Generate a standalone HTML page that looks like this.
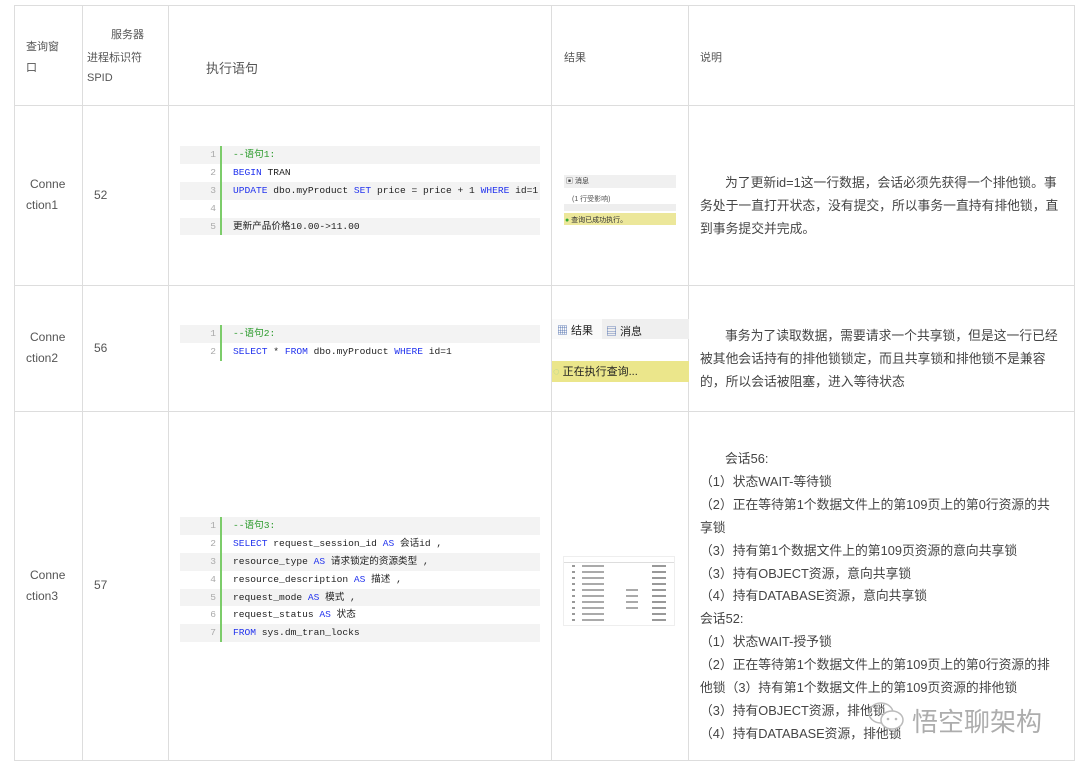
<!DOCTYPE html>
<html><head><meta charset="utf-8"><style>
*{margin:0;padding:0;box-sizing:border-box}
body{width:1080px;height:767px;background:#fff;position:relative;overflow:hidden;font-family:"Liberation Sans","Noto Sans CJK SC",sans-serif;color:#444}
.a{position:absolute;white-space:nowrap}
.h{position:absolute;height:1px;background:#ddd}
.v{position:absolute;width:1px;background:#ddd}
.s{font-size:11px;color:#555}
.code{position:absolute;left:180px;width:360px;font-family:"Liberation Mono","Noto Sans CJK SC",monospace;font-size:9.6px;white-space:nowrap}
.code div{height:17.9px;line-height:17.9px;position:relative;padding-left:53px;color:#222}
.code div:nth-child(odd){background:#f3f3f3}
.code div b{font-weight:normal;position:absolute;left:0;width:36px;text-align:right;color:#aaa}
.code:after{content:"";position:absolute;left:40px;top:0;bottom:0;width:2px;background:#7ccc6a}
.k{color:#2233ee}.c{color:#2a9a2a}
.d{font-size:12.8px;color:#444;line-height:22.9px}
</style></head><body>
<div class="h" style="left:14px;top:5px;width:1061px"></div>
<div class="h" style="left:14px;top:105px;width:1061px"></div>
<div class="h" style="left:14px;top:285px;width:1061px"></div>
<div class="h" style="left:14px;top:411px;width:1061px"></div>
<div class="h" style="left:14px;top:760px;width:1061px"></div>
<div class="v" style="left:14px;top:5px;height:756px"></div>
<div class="v" style="left:82px;top:5px;height:756px"></div>
<div class="v" style="left:168px;top:5px;height:756px"></div>
<div class="v" style="left:551px;top:5px;height:756px"></div>
<div class="v" style="left:688px;top:5px;height:756px"></div>
<div class="v" style="left:1074px;top:5px;height:756px"></div>

<div class="a s" style="left:26px;top:38px">查询窗</div>
<div class="a s" style="left:26px;top:59px">口</div>
<div class="a s" style="left:111px;top:26px">服务器</div>
<div class="a s" style="left:87px;top:49px">进程标识符</div>
<div class="a s" style="left:87px;top:72px">SPID</div>
<div class="a" style="left:206px;top:58px;font-size:13px;color:#555">执行语句</div>
<div class="a s" style="left:564px;top:49px">结果</div>
<div class="a s" style="left:700px;top:49px">说明</div>

<div class="a" style="left:30px;top:177px;font-size:12px;color:#555">Conne</div>
<div class="a" style="left:26px;top:198px;font-size:12px;color:#555">ction1</div>
<div class="a" style="left:94px;top:188px;font-size:12px;color:#555">52</div>
<div class="a" style="left:30px;top:330px;font-size:12px;color:#555">Conne</div>
<div class="a" style="left:26px;top:351px;font-size:12px;color:#555">ction2</div>
<div class="a" style="left:94px;top:341px;font-size:12px;color:#555">56</div>
<div class="a" style="left:30px;top:568px;font-size:12px;color:#555">Conne</div>
<div class="a" style="left:26px;top:589px;font-size:12px;color:#555">ction3</div>
<div class="a" style="left:94px;top:578px;font-size:12px;color:#555">57</div>

<div class="code" style="top:146px">
<div><b>1</b><span class="c">--语句1:</span></div>
<div><b>2</b><span class="k">BEGIN</span> TRAN</div>
<div><b>3</b><span class="k">UPDATE</span> dbo.myProduct <span class="k">SET</span> price = price + 1 <span class="k">WHERE</span> id=1</div>
<div><b>4</b></div>
<div><b>5</b>更新产品价格10.00-&gt;11.00</div>
</div>
<div class="code" style="top:325px">
<div><b>1</b><span class="c">--语句2:</span></div>
<div><b>2</b><span class="k">SELECT</span> * <span class="k">FROM</span> dbo.myProduct <span class="k">WHERE</span> id=1</div>
</div>
<div class="code" style="top:517px">
<div><b>1</b><span class="c">--语句3:</span></div>
<div><b>2</b><span class="k">SELECT</span> request_session_id <span class="k">AS</span> 会话id ,</div>
<div><b>3</b>resource_type <span class="k">AS</span> 请求锁定的资源类型 ,</div>
<div><b>4</b>resource_description <span class="k">AS</span> 描述 ,</div>
<div><b>5</b>request_mode <span class="k">AS</span> 模式 ,</div>
<div><b>6</b>request_status <span class="k">AS</span> 状态</div>
<div><b>7</b><span class="k">FROM</span> sys.dm_tran_locks</div>
</div>

<div class="a" style="left:564px;top:175px;width:112px;height:13px;background:#f0f0f0"></div>
<div class="a" style="left:566px;top:176px;font-size:7px;color:#333">▣ 消息</div>
<div class="a" style="left:572px;top:194px;font-size:7px;color:#555">(1 行受影响)</div>
<div class="a" style="left:564px;top:204px;width:112px;height:7px;background:#eee"></div>
<div class="a" style="left:564px;top:213px;width:112px;height:12px;background:#ece79a"></div>
<div class="a" style="left:565px;top:215px;font-size:7px;color:#333"><span style="color:#3a3">●</span> 查询已成功执行。</div>

<div class="a" style="left:552px;top:319px;width:137px;height:20px;background:#efefef"></div>
<div class="a" style="left:552px;top:319px;width:50px;height:20px;background:#fafafa"></div>
<div class="a" style="left:557px;top:322px;font-size:11px;color:#222"><span style="color:#46a">▦</span> 结果</div>
<div class="a" style="left:606px;top:323px;font-size:11px;color:#222"><span style="color:#46a">▤</span> 消息</div>
<div class="a" style="left:552px;top:361px;width:137px;height:21px;background:#ebe68b"></div>
<div class="a" style="left:553px;top:363px;font-size:11px;color:#222"><span style="color:#9c9">◌</span> 正在执行查询...</div>

<div class="a" style="left:563px;top:556px;width:112px;height:70px;border:1px solid #eee;background:#fff">
<div style="position:absolute;left:0;top:0;width:110px;height:6px;border-bottom:1px solid #ddd"></div>
<div style="position:absolute;left:8px;top:8px;width:3px;height:60px;background:repeating-linear-gradient(#999 0 2px,#fff 2px 6px)"></div>
<div style="position:absolute;left:18px;top:8px;width:22px;height:60px;background:repeating-linear-gradient(#aaa 0 2px,#fff 2px 6px)"></div>
<div style="position:absolute;left:62px;top:32px;width:12px;height:24px;background:repeating-linear-gradient(#aaa 0 2px,#fff 2px 6px)"></div>
<div style="position:absolute;left:88px;top:8px;width:14px;height:60px;background:repeating-linear-gradient(#999 0 2px,#fff 2px 6px)"></div>
</div>

<div class="a d" style="left:700px;top:172px"><span style="padding-left:25px">为了更新id=1这一行数据，会话必须先获得一个排他锁。事</span><br>务处于一直打开状态，没有提交，所以事务一直持有排他锁，直<br>到事务提交并完成。</div>
<div class="a d" style="left:700px;top:325px"><span style="padding-left:25px">事务为了读取数据，需要请求一个共享锁，但是这一行已经</span><br>被其他会话持有的排他锁锁定，而且共享锁和排他锁不是兼容<br>的，所以会话被阻塞，进入等待状态</div>
<div class="a d" style="left:700px;top:448px">
<div style="padding-left:25px">会话56:</div>
<div>（1）状态WAIT-等待锁</div>
<div>（2）正在等待第1个数据文件上的第109页上的第0行资源的共</div>
<div>享锁</div>
<div>（3）持有第1个数据文件上的第109页资源的意向共享锁</div>
<div>（3）持有OBJECT资源，意向共享锁</div>
<div>（4）持有DATABASE资源，意向共享锁</div>
<div>会话52:</div>
<div>（1）状态WAIT-授予锁</div>
<div>（2）正在等待第1个数据文件上的第109页上的第0行资源的排</div>
<div>他锁（3）持有第1个数据文件上的第109页资源的排他锁</div>
<div>（3）持有OBJECT资源，排他锁</div>
<div>（4）持有DATABASE资源，排他锁</div>
</div>

<svg class="a" style="left:866px;top:700px" width="40" height="34" viewBox="0 0 40 34"><g fill="none" stroke="#bbb" stroke-width="1.5"><ellipse cx="15" cy="13" rx="12" ry="10"/><ellipse cx="26" cy="20" rx="11" ry="9" fill="#fff"/></g><circle cx="22" cy="19" r="1.3" fill="#bbb"/><circle cx="30" cy="19" r="1.3" fill="#bbb"/></svg>
<div class="a" style="left:912px;top:702px;font-size:26px;color:#999;opacity:.8">悟空聊架构</div>
</body></html>
